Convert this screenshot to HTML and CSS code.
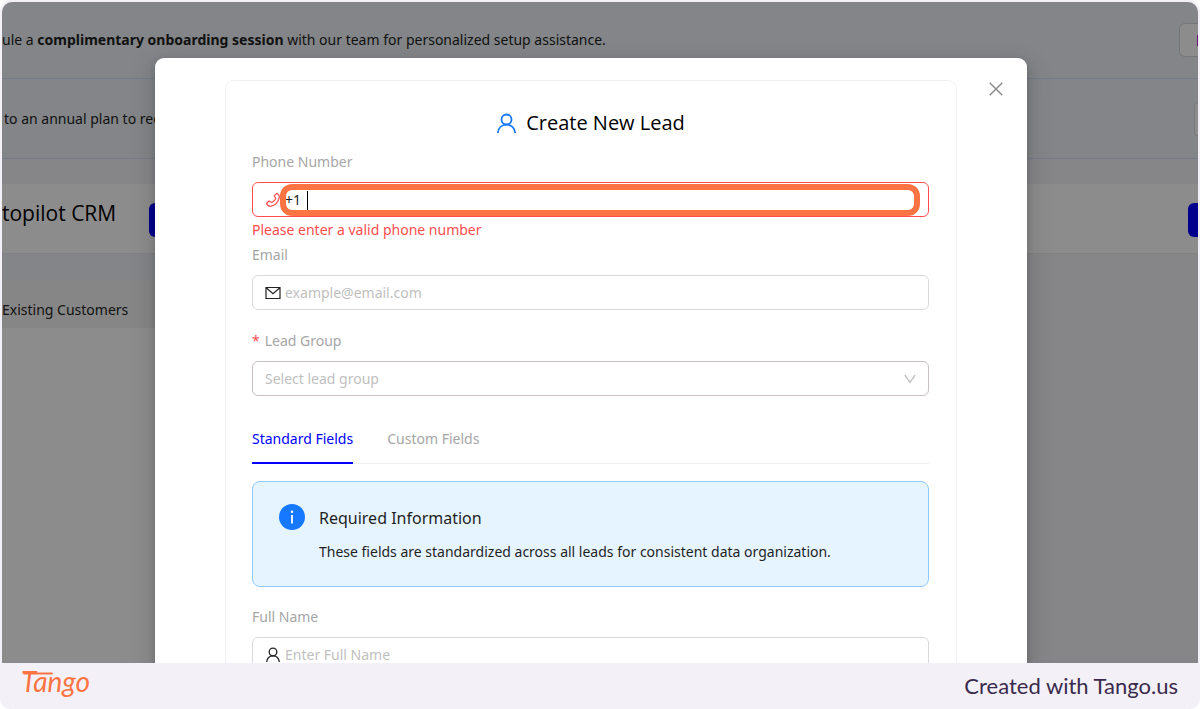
FILE: index.html
```html
<!DOCTYPE html>
<html lang="en">
<head>
<meta charset="utf-8">
<meta name="viewport" content="width=device-width, initial-scale=1">
<title>Create New Lead</title>
<link rel="stylesheet" href="styles.css">
</head>
<body>
<div class="frame">
  <div class="stage">
    <div class="page">
      <div class="banner">
        <p class="banner-text">ule a <strong>complimentary onboarding session</strong> with our team for personalized setup assistance.</p>
        <button class="ghost-btn" type="button" aria-label="Book session"><span class="ghost-mark"></span></button>
      </div>
      <div class="banner">
        <p class="banner-text banner-text-upgrade">to an annual plan to receive</p>
        <button class="ghost-btn ghost-btn-short" type="button" aria-label="Upgrade"></button>
      </div>
      <header class="page-header">
        <h1 class="brand">topilot CRM</h1>
        <button class="solid-btn" type="button" aria-label="Menu"></button>
        <button class="solid-btn solid-btn-edge" type="button" aria-label="Add"></button>
      </header>
      <div class="page-body">
        <div class="side">
          <div class="side-tab">Existing Customers</div>
        </div>
      </div>
    </div>

    <div class="overlay">
      <section class="modal" role="dialog" aria-labelledby="dialog-title">
        <button class="close" type="button" aria-label="Close">
          <svg width="14" height="14" viewBox="0 0 14 14" fill="none" stroke="currentColor" stroke-width="1.5"><path d="M.7.7 13.3 13.3M13.3.7.7 13.3"/></svg>
        </button>
        <form class="card">
          <h2 class="title" id="dialog-title">
            <svg width="21" height="21" viewBox="0 0 21 21" fill="none" stroke="#1677ff" stroke-width="1.8"><circle cx="10.500" cy="6.500" r="5"/><path d="M1.800 20c.5-5 4-8.300 8.700-8.300s8.200 3.300 8.700 8.300"/></svg>
            Create New Lead
          </h2>

          <label class="label" for="phone">Phone Number</label>
          <div class="field field-error">
            <svg class="icon" width="16" height="16" viewBox="0 0 16 16" fill="none" stroke="#ff4d4f" stroke-width="1.200" stroke-linejoin="round"><path d="M11.600 1.300 9.200 3.800l1.600 2.700c-.8 1.800-2.200 3.200-4 4L4 9 1.500 11.500c.8 1.800 2.200 2.900 3.900 2.800 4.500-1 8-4.500 9-9 .1-1.700-1-3.100-2.800-4Z"/></svg>
            <input class="input" id="phone" type="tel" value="+1">
            <span class="caret"></span>
            <span class="highlight"></span>
          </div>
          <p class="error">Please enter a valid phone number</p>

          <label class="label" for="email">Email</label>
          <div class="field">
            <svg class="icon" width="16" height="16" viewBox="0 0 16 16" fill="none" stroke="#222" stroke-width="1.200"><path d="M1 2.500h14v11H1zM1.500 3 8 8.600 14.500 3"/></svg>
            <input class="input" id="email" type="email" placeholder="example@email.com">
          </div>

          <label class="label label-gap" for="group"><span class="required">*</span>Lead Group</label>
          <div class="field field-select">
            <select class="select" id="group"><option>Select lead group</option></select>
            <svg class="chevron" width="12" height="10" viewBox="0 0 12 10" fill="none" stroke="#bfbfbf" stroke-width="1.300"><path d="M.8 1 6 8.300 11.200 1"/></svg>
          </div>

          <div class="tabs" role="tablist">
            <button class="tab tab-active" type="button" role="tab" aria-selected="true">Standard Fields</button>
            <button class="tab" type="button" role="tab" aria-selected="false">Custom Fields</button>
          </div>

          <div class="alert">
            <svg class="alert-icon" width="26" height="26" viewBox="0 0 26 26"><circle cx="13" cy="13" r="13" fill="#1677ff"/><circle cx="13" cy="7.700" r="1.300" fill="#fff"/><path d="M13 11v8.500" stroke="#fff" stroke-width="1.800"/></svg>
            <div>
              <h3 class="alert-title">Required Information</h3>
              <p class="alert-text">These fields are standardized across all leads for consistent data organization.</p>
            </div>
          </div>

          <label class="label label-gap" for="name">Full Name</label>
          <div class="field">
            <svg class="icon" width="16" height="16" viewBox="0 0 16 16" fill="none" stroke="#222" stroke-width="1.300"><circle cx="8" cy="5" r="3.800"/><path d="M1.700 15c.4-3.800 2.800-6.200 6.300-6.200s5.900 2.400 6.300 6.200"/></svg>
            <input class="input" id="name" type="text" placeholder="Enter Full Name">
          </div>
        </form>
      </section>
    </div>
  </div>

  <footer class="footer">
    <svg class="logo" width="80" height="44" viewBox="0 0 80 44" role="img" aria-label="Tango"><text class="logo-text" x="1" y="28">Tango</text><path d="M4 9.500h28" stroke="#ff7442" stroke-width="1.800" stroke-linecap="round"/></svg>
    <p class="credit">Created with Tango.us</p>
  </footer>
</div>
</body>
</html>
```
FILE: styles.css
```css
* { box-sizing: border-box; }

body {
  margin: 0;
  background: #fff;
  color: #1f1f1f;
  font-family: "Noto Sans", "Open Sans", sans-serif;
  font-size: 14px;
  line-height: 24px;
}

h1, h2, h3, p { margin: 0; font-weight: 400; }
button, input, select { font: inherit; color: inherit; }

.frame {
  display: flex;
  flex-direction: column;
  height: 100vh;
  padding: 2px 2px 0;
  border-radius: 10px;
  background: #f3f1f7;
  overflow: hidden;
}

.stage {
  position: relative;
  flex: 1;
  min-height: 0;
  border-radius: 10px 10px 0 0;
  overflow: hidden;
}

.page {
  display: flex;
  flex-direction: column;
  height: 100%;
  background: #f4f4f7;
}

.banner {
  display: flex;
  align-items: center;
  justify-content: space-between;
  height: 80px;
  border-bottom: 1px solid #d6e0ff;
  background: #eef3f7;
}
.banner:first-child { height: 77px; }
.banner-text { white-space: nowrap; }
.banner-text-upgrade { padding-left: 2px; }

.ghost-btn {
  display: flex;
  align-items: center;
  justify-content: flex-end;
  width: 19px;
  height: 34px;
  padding: 0;
  border: 1px solid #d9d9d9;
  border-right: 0;
  border-radius: 6px 0 0 6px;
  background: #fff;
}
.ghost-btn-short { width: 4px; }
.ghost-mark { width: 1px; height: 11px; background: #c026d3; }

.page-header {
  display: flex;
  align-items: center;
  height: 70px;
  margin-top: 25px;
  border-bottom: 1px solid #ebebeb;
  background: #fff;
}
.brand {
  flex: none;
  width: 147px;
  padding-bottom: 12px;
  color: #000;
  font-family: "Open Sans", sans-serif;
  font-size: 21px;
  white-space: nowrap;
}
.solid-btn {
  width: 40px;
  height: 34px;
  margin-top: 2px;
  padding: 0;
  border: 0;
  border-radius: 6px;
  background: #0000ff;
}
.solid-btn-edge { width: 10px; margin-left: auto; border-radius: 6px 0 0 6px; }

.page-body { flex: 1; }
.side { width: 50%; height: 100%; padding-top: 26px; background: linear-gradient(#eef3f7 26px, #fff 26px); }
.side-tab { padding-top: 18px; height: 48px; background: #f5f5f5; }

.overlay {
  position: absolute;
  inset: 0;
  display: flex;
  justify-content: center;
  padding: 56px 18px 0 0;
  background: rgba(0, 0, 0, 0.45);
}

.modal {
  position: relative;
  width: 100%;
  max-width: 872px;
  min-height: 700px;
  padding: 22px 70px 0;
  border-radius: 9px;
  background: #fff;
  box-shadow: 0 6px 16px rgba(0, 0, 0, 0.1), 0 3px 6px rgba(0, 0, 0, 0.14), 0 9px 28px 8px rgba(0, 0, 0, 0.06);
}

.close {
  position: absolute;
  top: 19px;
  right: 19px;
  display: flex;
  align-items: center;
  justify-content: center;
  width: 24px;
  height: 24px;
  padding: 0;
  border: 0;
  background: none;
  color: #8c8c8c;
}

.card {
  display: flex;
  flex-direction: column;
  padding: 26px 27px 26px 26px;
  border: 1px solid #f0f0f0;
  border-radius: 9px;
}

.title {
  display: flex;
  align-items: center;
  justify-content: center;
  gap: 9px;
  margin-bottom: 11px;
  color: #000;
  font-family: "Open Sans", sans-serif;
  font-size: 20px;
  font-weight: 500;
  line-height: 32px;
}

.label { margin-bottom: 8px; color: #a6a6a6; }
.label-gap { margin-top: 19px; }
.required { margin-right: 5px; color: #ff4d4f; }

.field {
  position: relative;
  display: flex;
  align-items: center;
  gap: 4px;
  height: 35px;
  padding: 0 12px;
  border: 1px solid #d9d9d9;
  border-radius: 6px;
}
.field-error { border-color: #ff4d4f; }
.field-select { border-color: #c9c0c0; }
.icon { flex: none; }

.input, .select {
  flex: 1;
  min-width: 0;
  height: 100%;
  padding: 0;
  border: 0;
  outline: 0;
  background: none;
}
.input::placeholder { color: #bfbfbf; opacity: 1; }
.select { appearance: none; color: #bfbfbf; }

.caret {
  position: absolute;
  top: 8px;
  left: 54px;
  width: 1px;
  height: 19px;
  background: #000;
}
.highlight {
  position: absolute;
  inset: 1px 8px 0 27px;
  border: 6px solid #ff7442;
  border-radius: 12px;
}
.error { margin: 1px 0; color: #ff4d4f; }

.tabs {
  display: flex;
  gap: 34px;
  margin: 31px 0 17px;
  border-bottom: 1px solid #f0f0f0;
}
.tab {
  height: 37px;
  margin-bottom: -1px;
  padding: 0 0 11px;
  border: 0;
  border-bottom: 2px solid transparent;
  background: none;
  color: #a6a6a6;
}
.tab-active { border-bottom-color: #0000ff; color: #0000ff; }

.alert {
  display: flex;
  gap: 14px;
  padding: 22px 26px 20px;
  border: 1px solid #91caff;
  border-radius: 8px;
  background: #e6f4ff;
}
.alert + .label-gap { margin-top: 18px; }
.alert-icon { flex: none; }
.alert-title { margin: 2px 0 10px; font-size: 16px; line-height: 24px; }
.alert-text { margin-bottom: 2px; }

.footer {
  display: flex;
  align-items: center;
  justify-content: space-between;
  height: 46px;
  padding: 0 20px 0 18px;
}
.logo-text { fill: #ff7442; font: italic 400 28px Lato, sans-serif; }
.credit { color: #3a2a4d; font-family: Lato, sans-serif; font-size: 22px; }
```
